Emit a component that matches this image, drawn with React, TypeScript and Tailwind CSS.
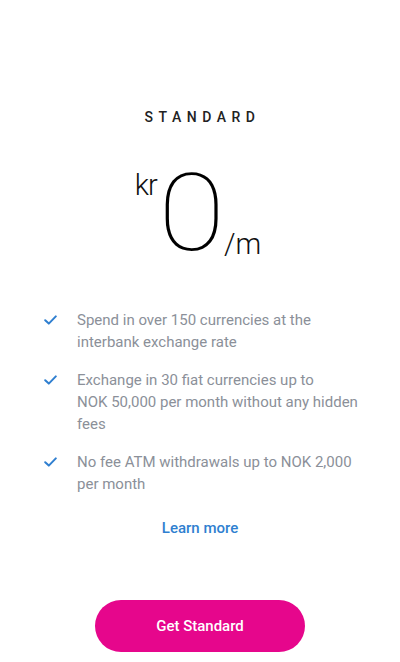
import React from "react";

const Check = () => (
  <svg width="13" height="10" viewBox="0 0 13 10" className="mt-[6px] shrink-0">
    <path d="M1.2 5.2 L4.8 8.6 L11.8 1.4" fill="none" stroke="#2f7fd0" strokeWidth="2" strokeLinecap="round" strokeLinejoin="round" />
  </svg>
);

const items = [
  "Spend in over 150 currencies at the interbank exchange rate",
  "Exchange in 30 fiat currencies up to NOK\u00a050,000 per month without any hidden fees",
  "No fee ATM withdrawals up to NOK\u00a02,000 per month",
];

export default function App() {
  return (
    <div className="w-[400px] h-[662px] bg-white flex flex-col items-center font-['Roboto',sans-serif] overflow-hidden">
      <div className="mt-[109px] text-[14px] leading-[16px] tracking-[5.5px] pl-[5px] font-medium text-[#222]">STANDARD</div>
      <div className="mt-[46px] flex items-start h-[94px] mr-[4px]">
        <span className="text-[29px] leading-none font-light text-[#111] mt-[0px] tracking-[-1px]">kr</span>
        <span className="text-[108px] leading-[80px] font-thin text-black mt-[2px] ml-[5px] inline-block scale-x-[1.13]">0</span>
        <span className="text-[29px] leading-none font-light text-[#111] self-end mb-[6px] ml-[3px]">/m</span>
      </div>
      <div className="mt-[44px] self-stretch pl-[44px] pr-[36px] flex flex-col gap-[16px]">
        {items.map((t) => (
          <div key={t} className="flex items-start">
            <Check />
            <div className="ml-[20px] text-[15px] leading-[22px] text-[#8b9099]">{t}</div>
          </div>
        ))}
      </div>
      <div className="mt-[22px] text-[15px] leading-[22px] font-medium text-[#2f7fd0]">Learn more</div>
      <button className="mt-[61px] w-[210px] h-[52px] rounded-full bg-[#e6068c] text-white text-[15px] font-medium">Get Standard</button>
    </div>
  );
}
